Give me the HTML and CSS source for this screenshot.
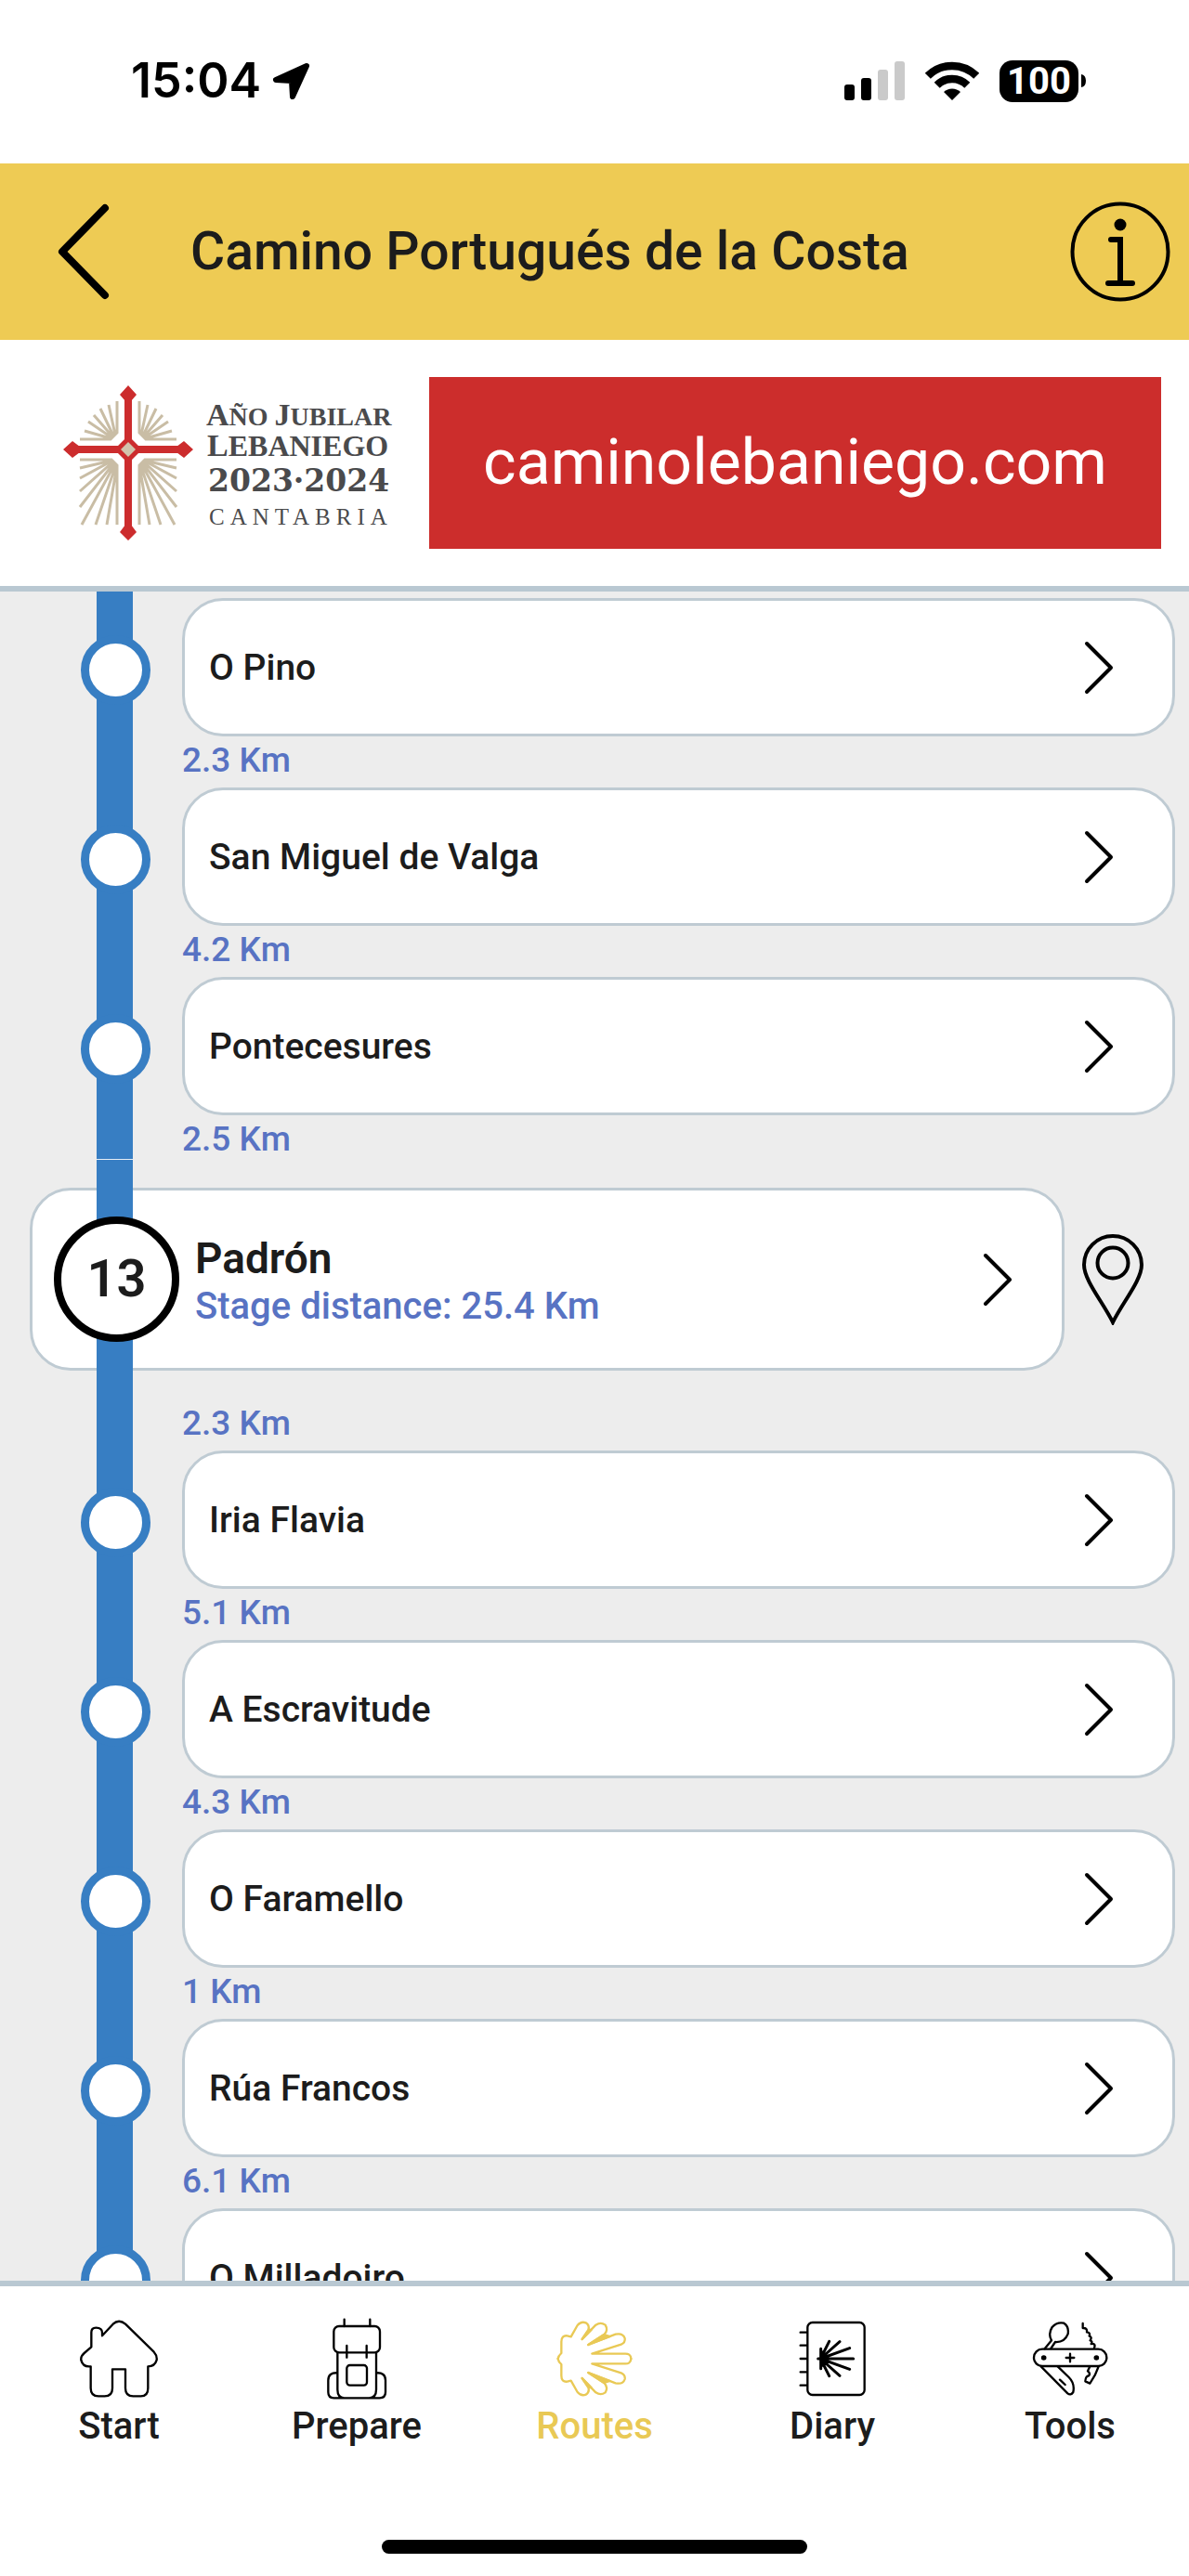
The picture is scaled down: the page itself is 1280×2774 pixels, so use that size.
FILE: index.html
```html
<!DOCTYPE html>
<html lang="en">
<head>
<meta charset="utf-8">
<meta name="viewport" content="width=device-width, initial-scale=1">
<title>Camino Portugués de la Costa</title>
<link rel="stylesheet" href="styles.css">
</head>
<body>
<svg class="defs" aria-hidden="true">
  <symbol id="chevron" viewBox="0 0 32 60"><path d="M3 4 29 30 3 56"/></symbol>
  <symbol id="rays" viewBox="66 412 144 172">
    <path d="M126 431V465L119 472H86M124 467 117 435M122 468 108 439M121 469 101 446M120 470 95 453M119 471 91 463"/>
    <path d="M126 564V500L120 494H86M120 495 86 503M121 495 86 514M122 496 86 528M123 497 86 545M124 498 88 564M125 499 103 564M126 500 115 564"/>
  </symbol>
</svg>
<div class="app">
  <div class="status">
    <div class="status-side">
      <span class="clock">15:04</span>
      <svg class="location" viewBox="294 66 42 43" aria-hidden="true"><path d="M331 71 298 86 315 87 316 104Z" fill="#000" stroke="#000" stroke-width="6" stroke-linejoin="round"/></svg>
    </div>
    <div class="status-side status-icons">
      <svg class="signal" viewBox="0 0 65 42" aria-hidden="true"><rect y="25" width="11" height="17" rx="3"/><rect x="18" y="18" width="11" height="24" rx="3"/><g fill="#cacaca"><rect x="36" y="9" width="11" height="33" rx="3"/><rect x="54" width="11" height="42" rx="3"/></g></svg>
      <svg class="wifi" viewBox="0 0 58 42" aria-hidden="true"><g fill="none" stroke="#000" stroke-width="8.500"><path d="M2.800 15.800A37 37 0 0 1 55.200 15.800"/><path d="M12.700 25.700A23 23 0 0 1 45.300 25.700"/></g><path d="M29 42 20 33A13 13 0 0 1 38 33Z"/></svg>
      <div class="battery"><span class="battery-level">100</span><svg class="battery-tip" viewBox="0 0 5 14" aria-hidden="true"><path d="M0 0Q5 1 5 7T0 14Z"/></svg></div>
    </div>
  </div>

  <header class="topbar">
    <button class="icon-button" aria-label="Back"><svg class="back" viewBox="0 0 56 104"><path d="M51 5 5 52 51 99"/></svg></button>
    <h1 class="title">Camino Portugués de la Costa</h1>
    <button class="icon-button" aria-label="Information"><svg class="info" viewBox="0 0 108 108"><circle cx="54" cy="54" r="51.500"/><path d="M44 41H54V88M41 88H67"/><circle class="info-dot" cx="54" cy="25" r="6.500"/></svg></button>
  </header>

  <a class="banner" href="#lebaniego">
    <svg class="logo" viewBox="66 412 360 172" role="img" aria-label="Año Jubilar Lebaniego 2023 2024 Cantabria">
      <g fill="none" stroke="#c9bda5" stroke-width="3">
        <use href="#rays" x="66" y="412" width="144" height="172"/>
        <use href="#rays" x="66" y="412" width="144" height="172" transform="matrix(-1 0 0 1 276 0)"/>
      </g>
      <path d="M138 424V572M78 483H198" stroke="#cc2c2d" stroke-width="8"/>
      <path d="M138 414 147 424 141 431H135L129 424ZM138 581 147 572 141 564H135L129 572ZM68 483 78 474 86 480V486L78 492ZM208 483 198 474 190 480V486L198 492ZM138 468 153 483 138 498 123 483Z" fill="#cc2c2d"/>
      <path d="M138 475 146 483 138 491 130 483Z" fill="#d2c4ac"/>
      <g class="logo-text">
        <text x="222" y="457"><tspan class="cap">A</tspan>ÑO <tspan class="cap">J</tspan>UBILAR</text>
        <text class="wide" x="223" y="490"><tspan class="cap">L</tspan>EBANIEGO</text>
        <text class="years" x="224" y="528">2023·2024</text>
        <text class="region" x="225" y="564">CANTABRIA</text>
      </g>
    </svg>
    <span class="banner-link">caminolebaniego.com</span>
  </a>

  <main class="route">
    <ul class="legs legs-first">
      <li class="leg"><span class="dot"></span><a class="card" href="#o-pino">O Pino<svg class="chevron"><use href="#chevron"/></svg></a><p class="distance">2.3 Km</p></li>
      <li class="leg"><span class="dot"></span><a class="card" href="#san-miguel">San Miguel de Valga<svg class="chevron"><use href="#chevron"/></svg></a><p class="distance">4.2 Km</p></li>
      <li class="leg"><span class="dot"></span><a class="card" href="#pontecesures">Pontecesures<svg class="chevron"><use href="#chevron"/></svg></a><p class="distance">2.5 Km</p></li>
    </ul>

    <section class="stage">
      <a class="card stage-card" href="#padron">
        <span class="stage-number">13</span>
        <span class="stage-text"><strong class="stage-name">Padrón</strong><span class="stage-distance">Stage distance: 25.4 Km</span></span>
        <svg class="chevron"><use href="#chevron"/></svg>
      </a>
      <button class="icon-button" aria-label="Show on map"><svg class="pin" viewBox="0 0 68 98"><path d="M34 95C24 74 3 50 3 33A31 31 0 0 1 65 33C65 50 44 74 34 95Z"/><circle cx="34" cy="31" r="16.500"/></svg></button>
    </section>

    <ul class="legs">
      <li class="leg"><p class="distance">2.3 Km</p></li>
      <li class="leg"><span class="dot"></span><a class="card" href="#iria-flavia">Iria Flavia<svg class="chevron"><use href="#chevron"/></svg></a><p class="distance">5.1 Km</p></li>
      <li class="leg"><span class="dot"></span><a class="card" href="#a-escravitude">A Escravitude<svg class="chevron"><use href="#chevron"/></svg></a><p class="distance">4.3 Km</p></li>
      <li class="leg"><span class="dot"></span><a class="card" href="#o-faramello">O Faramello<svg class="chevron"><use href="#chevron"/></svg></a><p class="distance">1 Km</p></li>
      <li class="leg"><span class="dot"></span><a class="card" href="#rua-francos">Rúa Francos<svg class="chevron"><use href="#chevron"/></svg></a><p class="distance">6.1 Km</p></li>
      <li class="leg"><span class="dot"></span><a class="card" href="#o-milladoiro">O Milladoiro<svg class="chevron"><use href="#chevron"/></svg></a></li>
    </ul>
  </main>

  <nav class="tabs">
    <a class="tab" href="#start">
      <svg class="tab-icon" viewBox="240 492 288 288"><path d="M295 592V545Q295 530 310 530Q330 530 330 546V556L365 518Q384 500 405 518L497 608Q508 620 506 634Q500 655 478 655V725Q478 751 455 751H430Q405 751 405 725V664H363V725Q363 751 338 751H318Q293 751 293 725V655Q268 658 262 635Q260 622 272 612Z"/></svg>
      Start
    </a>
    <a class="tab" href="#prepare">
      <svg class="tab-icon" viewBox="1008 492 288 288"><rect x="1078" y="525" width="149" height="85" rx="17"/><path d="M1112 503V525M1195 503V525M1120 588V626M1184 588V626M1090 610V730Q1090 757 1112 757H1192Q1215 757 1215 730V610M1090 676Q1060 674 1060 700V738Q1060 757 1078 757H1226Q1245 757 1245 738V700Q1245 674 1215 676"/><rect x="1120" y="651" width="65" height="65" rx="10"/></svg>
      Prepare
    </a>
    <a class="tab tab-active" href="#routes" aria-current="page">
      <svg class="tab-icon" viewBox="336 492 288 288"><g id="shell-half"><path d="M362 630Q363 621 373 612V575Q373 554 392 556L404 559L425 522Q437 508 452 514Q465 522 460 537L440 567L484 521Q500 510 515 521Q525 538 512 551L460 585L548 551Q572 546 578 564Q580 578 566 584L472 614H576Q597 612 598 630"/><path class="solid" d="M461 538 440 567 470 536ZM511 552 460 585 530 558Z"/></g><use href="#shell-half" transform="matrix(1 0 0 -1 0 1260)"/></svg>
      Routes
    </a>
    <a class="tab" href="#diary">
      <svg class="tab-icon" viewBox="-96 492 288 288"><rect x="-32" y="513" width="184" height="234" rx="16"/><path d="M-55 545H-34M-55 587H-34M-55 630H-34M-55 673H-34M-55 716H-34"/><path d="M2 630H116M10 630 104 596M10 630 72 575M10 630 38 574M10 630 104 664M10 630 72 685M10 630 38 686M11 598V662M18 608V652" stroke-width="9"/></svg>
      Diary
    </a>
    <a class="tab" href="#tools">
      <svg class="tab-icon" viewBox="672 492 288 288"><rect x="699" y="599" width="235" height="55" rx="27"/><path d="M803 627H829M816 614V640M734 598 756 571Q744 550 758 528Q774 510 796 515Q813 526 809 550Q798 578 768 576L754 597M857 516V531Q872 530 870 544Q882 545 878 557Q888 560 881 571Q890 574 884 582Q900 580 894 595M722 655 808 742Q818 750 826 738Q832 710 812 690L776 655M783 698 800 714M880 655 873 670Q883 678 876 685Q866 686 865 703L880 710Q898 685 908 655"/><circle class="solid" cx="731" cy="627" r="5"/><circle class="solid" cx="901" cy="627" r="5"/></svg>
      Tools
    </a>
  </nav>
  <div class="home-bar"></div>
</div>
</body>
</html>
```

FILE: styles.css
```css
* { box-sizing: border-box; }

body {
  margin: 0;
  font-family: Roboto, "Liberation Sans", sans-serif;
  font-weight: 500;
  color: #1c1c1c;
  background: #fff;
}

a { color: inherit; text-decoration: none; }
p, h1, ul { margin: 0; padding: 0; }
ul { list-style: none; }
svg { display: block; flex: none; }

.defs { position: absolute; width: 0; height: 0; }

.app {
  display: flex;
  flex-direction: column;
  height: 100vh;
}

/* Status bar */
.status {
  display: flex;
  flex: none;
  justify-content: space-between;
  align-items: center;
  height: 174px;
  padding: 0 111px 0 141px;
}
.status-side { display: flex; align-items: center; gap: 12px; }
.status-icons { gap: 22px; }
.clock { font: 600 52px/64px Inter, sans-serif; color: #000; }
.location { width: 42px; height: 43px; }
.signal { width: 65px; height: 42px; }
.wifi { width: 58px; height: 42px; }
.battery { display: flex; align-items: center; gap: 3px; }
.battery-level {
  width: 85px;
  border-radius: 14px;
  background: #000;
  color: #fff;
  font-size: 40px;
  font-weight: 700;
  line-height: 45px;
  text-align: center;
}
.battery-tip { width: 5px; height: 14px; }

/* Title bar */
.topbar {
  display: flex;
  flex: none;
  align-items: center;
  height: 192px;
  padding: 0 20px 0 62px;
  border-top: 2px solid #fff;
  background: #eecb54;
}
.icon-button { padding: 0; border: 0; background: none; cursor: pointer; }
.back { width: 56px; height: 104px; fill: none; stroke: #000; stroke-width: 8; stroke-linecap: round; stroke-linejoin: round; }
.title { flex: 1; padding-left: 87px; font-size: 57px; font-weight: 500; line-height: 72px; }
.info { width: 108px; height: 108px; fill: none; stroke: #000; stroke-width: 4; stroke-linecap: round; }
.info path { stroke-width: 6; }
.info .info-dot { fill: #000; stroke: none; }

/* Sponsor banner */
.banner {
  display: flex;
  flex: none;
  align-items: center;
  gap: 36px;
  padding: 40px 30px 40px 66px;
  border-bottom: 6px solid #b9c8d2;
}
.logo { width: 360px; height: 172px; }
.logo-text { font: 700 28px "Liberation Serif", serif; fill: #4a4a4c; }
.logo-text .cap { font-size: 34px; }
.logo-text .wide { font-size: 32px; }
.logo-text .years { font: 700 33px "DejaVu Serif", serif; }
.logo-text .region { font-size: 25px; font-weight: 400; letter-spacing: 6px; }
.banner-link {
  flex: 1;
  background: #cc2d2c;
  color: #fff;
  font-size: 68px;
  font-weight: 400;
  line-height: 185px;
  text-align: center;
}

/* Route list */
.route {
  flex: 1 1 0;
  min-height: 0;
  overflow-y: auto;
  scrollbar-width: none;
  background: #ededed;
}
.legs { background: linear-gradient(#377ec3, #377ec3) 104px 0 / 39px 100% no-repeat; }
.legs-first { padding-top: 7px; }
.leg {
  display: grid;
  grid-template-columns: 109px 1fr;
  padding: 0 15px 0 87px;
}
.dot {
  width: 75px;
  height: 75px;
  margin-top: 40px;
  border: 9px solid #377ec3;
  border-radius: 50%;
  background: #fff;
}
.card {
  display: flex;
  align-items: center;
  justify-content: space-between;
  height: 149px;
  padding: 0 63px 0 26px;
  border: 3px solid #bfcbd3;
  border-radius: 44px;
  background: #fff;
  font-size: 39px;
}
.chevron { width: 32px; height: 60px; fill: none; stroke: #000; stroke-width: 4; stroke-linecap: round; stroke-linejoin: round; }
.distance { grid-column: 2; padding-bottom: 3px; color: #5873c3; font-size: 37px; line-height: 52px; }

/* Stage card */
.stage {
  position: relative;
  display: flex;
  align-items: center;
  gap: 18px;
  padding: 23px 48px 31px 32px;
}
.stage::before {
  content: "";
  position: absolute;
  z-index: 1;
  top: -8px;
  bottom: 0;
  left: 104px;
  width: 39px;
  border-top: 1px solid #e6eef5;
  background: #377ec3;
}
.stage-card { flex: 1; height: 197px; padding: 0 53px 0 23px; gap: 17px; }
.stage-number {
  position: relative;
  z-index: 2;
  width: 135px;
  border: 8px solid #000;
  border-radius: 50%;
  background: #fff;
  font-size: 56px;
  font-weight: 600;
  line-height: 119px;
  text-align: center;
}
.stage-text { display: flex; flex: 1; flex-direction: column; padding-top: 6px; }
.stage-name { font-size: 46px; font-weight: 600; line-height: 52px; }
.stage-distance { color: #5873c3; font-size: 40px; line-height: 52px; }
.pin { width: 68px; height: 98px; fill: none; stroke: #000; stroke-width: 4; }

/* Bottom tabs */
.tabs {
  display: grid;
  flex: none;
  grid-template-columns: repeat(5, 1fr);
  padding-top: 32px;
  border-top: 6px solid #b9c8d2;
}
.tab {
  display: flex;
  flex-direction: column;
  align-items: center;
  font-size: 40px;
  line-height: 46px;
}
.tab-active { color: #e9c955; }
.tab-icon { width: 96px; height: 96px; fill: none; stroke: currentColor; stroke-width: 7; stroke-linecap: round; stroke-linejoin: round; }
.tab:not(.tab-active) .tab-icon { color: #000; }
.tab-icon .solid { fill: currentColor; }
.home-bar {
  flex: none;
  width: 458px;
  height: 15px;
  margin: 99px auto 24px;
  border-radius: 8px;
  background: #000;
}
```
